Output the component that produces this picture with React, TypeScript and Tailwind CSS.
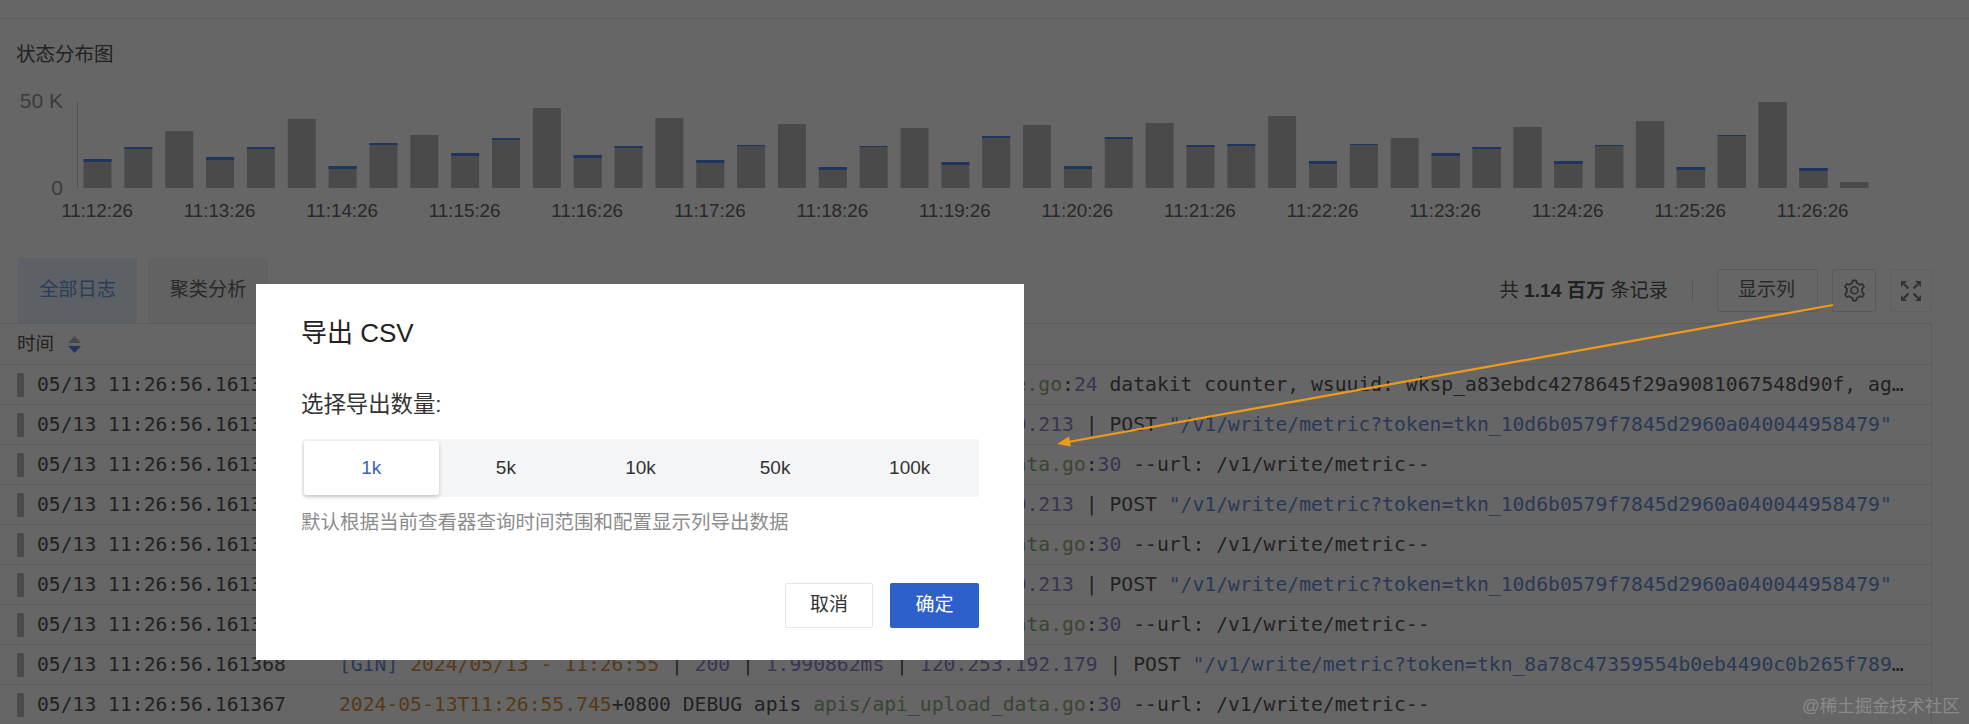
import { AiOutlineSetting } from "react-icons/ai";

const tops = [159,147,131,157,147,119,166,143,135,153,138,108,155,146,118,160,145,124,167,146,128,162,136,125,166,137,123,145,144,116,161,144,138,153,147,127,161,145,121,167,135,102,168,182];
const caps = [3,2,0,3,2,0,3,2,0,3,2,0,3,2,0,3,1,0,3,1,0,3,2,0,3,2,0,2,2,0,3,1,0,3,2,0,3,1,0,3,1,0,3,0];
const labels = ["11:12:26","11:13:26","11:14:26","11:15:26","11:16:26","11:17:26","11:18:26","11:19:26","11:20:26","11:21:26","11:22:26","11:23:26","11:24:26","11:25:26","11:26:26"];

function Chart() {
  return (
    <svg width="1969" height="150" viewBox="0 80 1969 150" className="mt-[16px] block">
      <text x="63" y="108" textAnchor="end" fontSize="21" fill="#959595" fontFamily="Liberation Sans">50 K</text>
      <text x="63" y="195" textAnchor="end" fontSize="21" fill="#959595" fontFamily="Liberation Sans">0</text>
      <line x1="77.500" y1="102" x2="77.500" y2="188" stroke="#c9c9c9" />
      {tops.map((t, i) => {
        const x = 83.5 + 40.85 * i;
        return (
          <g key={i}>
            <rect x={x} y={t} width={i > 32 ? 28.5 : 28} height={188 - t} fill="#b9b9b9" />
            {caps[i] > 0 && <rect x={x} y={t} width={i > 32 ? 28.5 : 28} height={caps[i]} fill="#4d85e8" />}
          </g>
        );
      })}
      {labels.map((l, i) => (
        <text key={l} x={97 + 122.55 * i} y="217" textAnchor="middle" fontSize="18.800" fill="#666666" fontFamily="Liberation Sans">{l}</text>
      ))}
    </svg>
  );
}

const Time = ({ t }: { t: string }) => <span className="text-[#d9923a]">{t}</span>;
const Num = ({ t }: { t: string }) => <span className="text-[#9a7fd0]">{t}</span>;
const File = ({ t }: { t: string }) => <span className="text-[#8fb07f]">{t}</span>;
const Str = ({ t }: { t: string }) => <span className="text-[#6a90d8]">{t}</span>;

function Debug() {
  return (
    <>
      <Time t="2024-05-13T11:26:55.745" />+0800 DEBUG apis <File t="apis/api_upload_data.go" />:<Num t="30" /> --url: /v1/write/metric--
    </>
  );
}

function Gin({ d, ip, url }: { d: string; ip: string; url: string }) {
  return (
    <>
      <span className="text-[#6a90d8]">[GIN]</span> <Time t="2024/05/13 - 11:26:55" /> | <Num t="200" /> | <Num t={d} /> | <Num t={ip} /> | POST <Str t={url} />
    </>
  );
}

const url1 = '"/v1/write/metric?token=tkn_10d6b0579f7845d2960a040044958479"';
const gin1 = <Gin d="1.90862ms" ip="120.253.19.213" url={url1} />;

const rows = [
  { time: "05/13 11:26:56.161373", body: <><Time t="2024-05-13T11:26:55.745" />+0800 DEBUG apis <File t="apis/metrics_store.go" />:<Num t="24" /> datakit counter, wsuuid: wksp_a83ebdc4278645f29a9081067548d90f, agent_id: agnt_01</> },
  { time: "05/13 11:26:56.161372", body: gin1 },
  { time: "05/13 11:26:56.161371", body: <Debug /> },
  { time: "05/13 11:26:56.161371", body: gin1 },
  { time: "05/13 11:26:56.161370", body: <Debug /> },
  { time: "05/13 11:26:56.161370", body: gin1 },
  { time: "05/13 11:26:56.161369", body: <Debug /> },
  { time: "05/13 11:26:56.161368", body: <Gin d="1.990862ms" ip="120.253.192.179" url='"/v1/write/metric?token=tkn_8a78c47359554b0eb4490c0b265f78912345"' /> },
  { time: "05/13 11:26:56.161367", body: <Debug /> },
];

function Expand() {
  return (
    <svg width="22" height="22" viewBox="0 0 22 22" fill="none">
      <path d="M4 4l4.500 4.500M18 4l-4.500 4.500M4 18l4.500-4.500M18 18l-4.500-4.500" stroke="#7d7d7d" strokeWidth="2.200" />
      <path d="M1 1h6L1 7zM21 1h-6L21 7zM1 21h6L1 15zM21 21h-6L21 15z" fill="#7d7d7d" />
    </svg>
  );
}

export default function App() {
  return (
    <div className="relative h-[724px] w-[1969px] overflow-hidden bg-white font-['Liberation_Sans','Noto_Sans_CJK_SC',sans-serif] text-[#555555]">
      <div className="h-[19px] border-b border-[#e4e4e4]" />
      <div className="pl-[16px] pt-[25px] text-[19.500px] leading-[20px] text-[#555555]">状态分布图</div>
      <Chart />

      <div className="mt-[28px] flex h-[65px] w-[1932px] items-stretch justify-between pl-[18px]">
        <div className="flex gap-[11px]">
          <div className="flex w-[119px] items-center justify-center bg-[#e8f0fa] text-[19.200px] text-[#6f9ae0]">全部日志</div>
          <div className="flex w-[120px] items-center justify-center bg-[#f6f6f6] text-[19.200px] text-[#666666]">聚类分析</div>
        </div>
        <div className="flex items-start pt-[11px]">
          <div className="flex h-[43px] items-center gap-[24px]">
            <div className="text-[19.200px] leading-[24px] text-[#555555]">共 <span className="font-bold">1.14 百万</span> 条记录</div>
            <div className="h-[20px] w-px bg-[#dcdcdc]" />
          </div>
          <div className="ml-[24px] flex h-[43px] w-[101px] items-center justify-center rounded-[2px] border border-[#e2e2e2] pr-[2px] text-[19px] text-[#666666]">显示列</div>
          <div className="ml-[14px] flex h-[43px] w-[44px] items-center justify-center rounded-[2px] border border-[#e2e2e2]">
            <AiOutlineSetting className="h-[25px] w-[25px] text-[#777777]" />
          </div>
          <div className="ml-[14px] flex h-[43px] w-[42px] items-center justify-center rounded-[2px] border border-[#efefef]">
            <Expand />
          </div>
        </div>
      </div>

      <div className="w-[1932px] border-r border-t border-[#e8e8e8]">
        <div className="flex h-[41px] items-center border-b border-[#e6e6e6] pl-[17px] text-[18.500px] text-[#555555]">
          <span>时间</span>
          <svg width="13" height="17" viewBox="0 0 13 17" className="ml-[14px]">
            <path d="M6.500 0L13 7H0z" fill="#b5b5b5" />
            <path d="M6.500 17L13 10H0z" fill="#5f85e8" />
          </svg>
        </div>
        {rows.map((r, i) => (
          <div key={i} className="flex h-[40px] items-center border-b border-[#e6e6e6] pl-[17px] pr-[27px] font-['DejaVu_Sans_Mono',monospace] text-[19.700px] text-[#555555]">
            <div className="h-[24px] w-[7px] shrink-0 rounded-[1px] bg-[#b8b8b8]" />
            <div className="ml-[13px] w-[302px] shrink-0 whitespace-pre">{r.time}</div>
            <div className="min-w-0 flex-1 truncate whitespace-pre">{r.body}</div>
          </div>
        ))}
      </div>

      <div className="absolute inset-0 bg-black/60" />

      <div className="absolute left-[256px] top-[284px] flex h-[376px] w-[768px] flex-col bg-white pb-[32px] pl-[46px] pr-[45px] pt-[32px]">
        <div className="-ml-px text-[26px] leading-[34px] text-[#222222]">导出 CSV</div>
        <div className="-ml-px mt-[40px] text-[22.400px] leading-[30px] text-[#333333]">选择导出数量:</div>
        <div className="mt-[19px] grid h-[58px] grid-cols-5 rounded-[3px] bg-[#f3f5f7] p-[2px] text-[19px] text-[#333333]">
          <div className="flex items-center justify-center rounded-[3px] bg-white text-[#3a63b8] shadow-[0_2px_4px_rgba(0,0,0,0.2)]">1k</div>
          <div className="flex items-center justify-center">5k</div>
          <div className="flex items-center justify-center">10k</div>
          <div className="flex items-center justify-center">50k</div>
          <div className="flex items-center justify-center">100k</div>
        </div>
        <div className="-ml-px mt-[12px] text-[19.500px] leading-[26px] text-[#8c8c8c]">默认根据当前查看器查询时间范围和配置显示列导出数据</div>
        <div className="mt-auto flex justify-end gap-[17px]">
          <div className="flex h-[45px] w-[88px] items-center justify-center rounded-[2px] border border-[#e5e5e5] text-[19px] text-[#333333]">取消</div>
          <div className="flex h-[45px] w-[89px] items-center justify-center rounded-[2px] bg-[#2e60cc] text-[19px] text-white">确定</div>
        </div>
      </div>

      <svg className="pointer-events-none absolute left-0 top-0" width="1969" height="724" fill="none">
        <line x1="1833" y1="305" x2="1068" y2="442" stroke="#f09a1a" strokeWidth="2.200" />
        <path d="M1057 444L1069 436.500L1071 446.500z" fill="#f09a1a" />
      </svg>

      <div className="absolute left-[1802px] top-[694px] text-[17.500px] leading-[24px] text-[#8a8a8a]">@稀土掘金技术社区</div>
    </div>
  );
}
